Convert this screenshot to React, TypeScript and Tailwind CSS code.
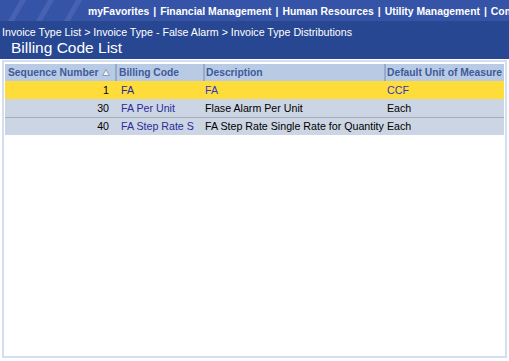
const rows = [
  { seq: "1", code: "FA", desc: "FA", unit: "CCF", selected: true },
  { seq: "30", code: "FA Per Unit", desc: "Flase Alarm Per Unit", unit: "Each", selected: false },
  { seq: "40", code: "FA Step Rate S", desc: "FA Step Rate Single Rate for Quantity", unit: "Each", selected: false },
];

const menu = ["myFavorites", "Financial Management", "Human Resources", "Utility Management", "Community Development"];

function Stripes() {
  return (
    <svg width="86" height="21" viewBox="0 0 86 21" className="shrink-0">
      <rect x="0" y="0" width="86" height="21" fill="#3553a7" />
      <polygon points="20,0 26,0 14,21 8,21" fill="#4862b3" />
      <polygon points="48,0 54,0 42,21 36,21" fill="#4862b3" />
      <polygon points="76,0 82,0 70,21 64,21" fill="#4862b3" />
    </svg>
  );
}

function SortUp() {
  return (
    <svg width="8" height="7" viewBox="0 0 8 7" className="ml-[4px]">
      <polygon points="4,0.5 7.5,6.5 0.5,6.5" fill="#eef2fa" stroke="#8f9bb0" strokeWidth="1" />
    </svg>
  );
}

export default function App() {
  return (
    <div
      className="flex h-[361px] w-[509px] flex-col overflow-hidden bg-white text-[10.67px]"
      style={{ fontFamily: "'Liberation Sans', Arial, sans-serif" }}
    >
      <div className="flex h-[22px] shrink-0 items-center overflow-hidden whitespace-nowrap border-b border-[#2a4790] bg-[#3553a7]">
        <Stripes />
        <div className="ml-[2px] pt-[3px] text-[10.4px] font-bold text-white">
          {menu.map((m, i) => (
            <span key={m}>
              {i > 0 && <span className="px-[4px]">|</span>}
              {m}
            </span>
          ))}
        </div>
      </div>
      <div className="h-[37px] shrink-0 bg-[#284793] px-[2px] text-white">
        <div className="pt-[4px] text-[10.67px] leading-[13px]">
          Invoice Type List &gt; Invoice Type - False Alarm &gt; Invoice Type Distributions
        </div>
        <div className="pl-[9px] text-[15.5px] leading-[18px]">Billing Code List</div>
      </div>
      <div className="mb-[3px] ml-[2px] mr-[2px] mt-[1px] flex-1 border-2 border-[#d3def0] bg-white px-[1px] pt-[2px]">
        <div className="grid grid-cols-[112px_88px_181px_1fr] whitespace-nowrap leading-[13px]">
          <div className="flex h-[17px] items-center border-r-2 border-[#95aacd] bg-[#b8cae4] pl-[3px] text-[10.3px] font-bold text-[#3e5b9b]">
            Sequence Number
            <SortUp />
          </div>
          <div className="flex h-[17px] items-center border-r-2 border-[#95aacd] bg-[#b8cae4] pl-[2px] text-[10.3px] font-bold text-[#3e5b9b]">
            Billing Code
          </div>
          <div className="flex h-[17px] items-center border-r-2 border-[#95aacd] bg-[#b8cae4] pl-[1px] text-[10.3px] font-bold text-[#3e5b9b]">
            Description
          </div>
          <div className="flex h-[17px] items-center overflow-hidden bg-[#b8cae4] pl-[1px] text-[10.3px] font-bold text-[#3e5b9b]">
            Default Unit of Measure
          </div>
          {rows.map((r, i) => {
            const bg = r.selected ? "bg-[#fedd3a]" : "bg-[#ccd5e3]";
            const line = i > 1 ? "border-t border-[#a9adb5]" : "";
            const color = r.selected ? "text-[#3535c8]" : "text-black";
            return [
              <div key={r.seq + "a"} className={`flex h-[18px] items-center justify-end pr-[8px] ${bg} ${line} text-black`}>
                {r.seq}
              </div>,
              <div key={r.seq + "b"} className={`flex h-[18px] items-center pl-[4px] ${bg} ${line} text-[#2b2b9b]`}>
                {r.code}
              </div>,
              <div key={r.seq + "c"} className={`flex h-[18px] items-center overflow-hidden ${bg} ${line} ${color}`}>
                {r.desc}
              </div>,
              <div key={r.seq + "d"} className={`flex h-[18px] items-center pl-[1px] ${bg} ${line} ${color}`}>
                {r.unit}
              </div>,
            ];
          })}
        </div>
      </div>
    </div>
  );
}
